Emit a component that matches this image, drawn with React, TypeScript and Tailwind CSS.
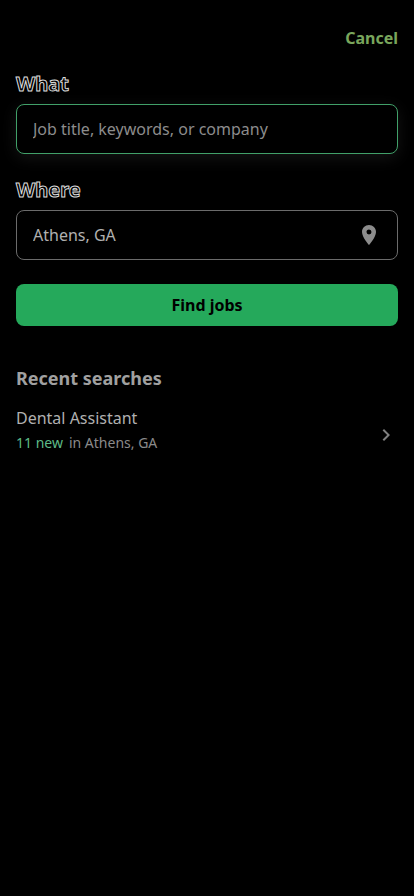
import { useState } from "react";
import { MdLocationOn, MdChevronRight } from "react-icons/md";

const RECENT = [{ title: "Dental Assistant", fresh: 11, place: "Athens, GA" }];

export default function App() {
  const [what, setWhat] = useState("");
  const [where, setWhere] = useState("Athens, GA");

  return (
    <main className="min-h-screen bg-black px-4 pt-6 font-['Noto_Sans',sans-serif] text-base text-[#bdbdbd]">
      <header className="flex justify-end">
        <button type="button" className="h-7 font-bold leading-7 text-[#79a65c]">
          Cancel
        </button>
      </header>

      <form className="pt-[18px]" onSubmit={(e) => e.preventDefault()}>
        <FieldLabel htmlFor="what" text="What" />
        <input
          id="what"
          type="text"
          value={what}
          onChange={(e) => setWhat(e.target.value)}
          placeholder="Job title, keywords, or company"
          className="mt-1.5 block h-[50px] w-full rounded-lg border border-[#41a069] bg-black px-4 shadow-[0_4px_16px_rgba(255,255,255,0.08)] outline-none placeholder:text-[#8c8c8c]"
        />

        <div className="pt-[22px]">
          <FieldLabel htmlFor="where" text="Where" />
        </div>
        <div className="mt-1.5 flex h-[50px] items-center rounded-lg border border-[#6b6b6b] px-4">
          <input
            id="where"
            type="text"
            value={where}
            onChange={(e) => setWhere(e.target.value)}
            className="min-w-0 flex-1 bg-transparent text-[#b0b0b0] outline-none"
          />
          <button type="button" aria-label="Use my location" className="text-[#8c8c8c]">
            <MdLocationOn size={24} />
          </button>
        </div>

        <button
          type="submit"
          className="mt-6 h-[42px] w-full rounded-lg bg-[#25a95b] font-bold text-black"
        >
          Find jobs
        </button>
      </form>

      <section className="pt-10">
        <h2 className="text-lg font-bold leading-6 text-[#a0a0a0]">Recent searches</h2>
        <ul className="pt-4">
          {RECENT.map((item) => (
            <li key={item.title}>
              <a href="#recent" className="flex items-center justify-between">
                <span>
                  <span className="block leading-6 text-[#b0b0b0]">{item.title}</span>
                  <span className="flex gap-1.5 text-sm leading-[26px]">
                    <span className="text-[#5dbb87]">{item.fresh} new</span>
                    <span className="text-[#8a8a8a]">in {item.place}</span>
                  </span>
                </span>
                <MdChevronRight size={24} className="mt-2 text-[#808080]" />
              </a>
            </li>
          ))}
        </ul>
      </section>
    </main>
  );
}

function FieldLabel({ htmlFor, text }: { htmlFor: string; text: string }) {
  return (
    <label
      htmlFor={htmlFor}
      className="block text-xl font-bold leading-7 text-black [-webkit-text-stroke:1px_#dcdcdc]"
    >
      {text}
    </label>
  );
}
